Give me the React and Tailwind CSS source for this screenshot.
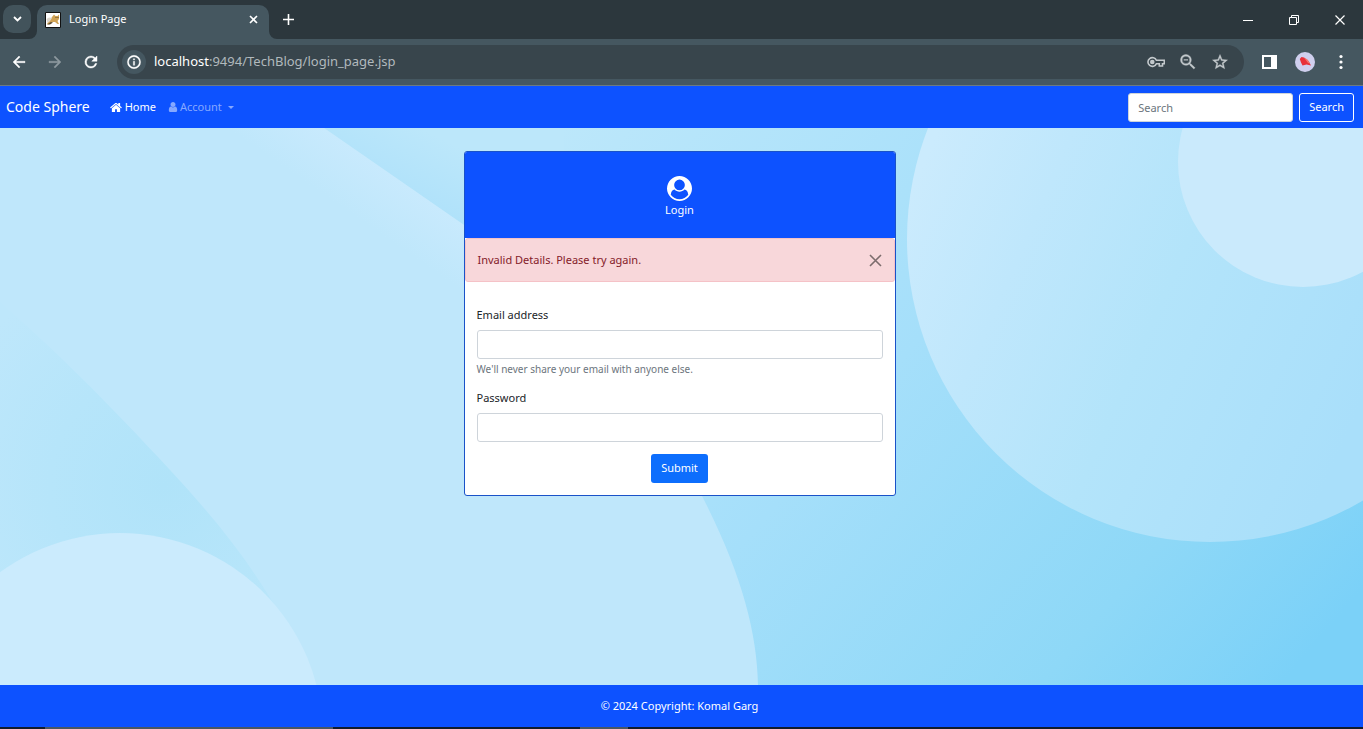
import { useId } from "react";

const FONT = "font-['Segoe_UI','Noto_Sans',sans-serif]";

function Glyph({ d, className, box = "0 0 24 24", rule = "nonzero", bold = 0 }) {
  return (
    <svg viewBox={box} className={className} fill="currentColor" fillRule={rule} stroke={bold ? "currentColor" : "none"} strokeWidth={bold} aria-hidden="true">
      <path d={d} />
    </svg>
  );
}

function Line({ d, className, box = "0 0 24 24", width = 2 }) {
  return (
    <svg viewBox={box} className={className} fill="none" stroke="currentColor" strokeWidth={width} aria-hidden="true">
      <path d={d} />
    </svg>
  );
}

function TabStrip() {
  return (
    <div className="flex h-[39px] items-start bg-[#2c373d]">
      <button aria-label="Search tabs" className="ml-[3px] mt-[5px] grid size-7 place-items-center rounded-[10px] bg-[#42535b]">
        <Line d="M1 1 4.500 4.500 8 1" box="0 0 9 6" className="h-1.5 w-[9px]" width={1.8} />
      </button>
      <div className="flex items-end self-stretch">
        <Glyph d="M8 0v8H0a8 8 0 0 0 8-8z" box="0 0 8 8" className="-ml-0.5 size-2 text-[#455760]" />
        <div className="flex h-[34px] w-[232px] items-center rounded-t-[10px] bg-[#455760] px-2 pb-[5px]">
          <svg viewBox="0 0 16 16" className="size-4" aria-hidden="true">
            <path d="M.5.5h15v15H.5z" fill="#fff" stroke="#111" />
            <path d="M7 5 9 2.500 10.500 4h2L14 2.500V7l-1.500 2 1.500 3h-1.500L10 10H7l-4 2.500-1-1L4.500 9z" fill="#d0a355" />
            <path d="M1.500 7 4 5.500 7 6 5 9l-2.500 2z" fill="#dcd6cc" />
            <path d="M2 12.500 6 10l2 .5-3 2zM10.500 5h1v1h-1zM12.500 5h1v1h-1z" fill="#5c4a30" />
          </svg>
          <span className="ml-2 flex-1 text-[11px]">Login Page</span>
          <button aria-label="Close tab" className="grid size-4 place-items-center">
            <Line d="M1 1 8 8M8 1 1 8" box="0 0 9 9" className="size-[9px]" width={1.6} />
          </button>
        </div>
        <Glyph d="M0 0v8h8a8 8 0 0 1-8-8z" box="0 0 8 8" className="size-2 text-[#455760]" />
      </div>
      <button aria-label="New tab" className="ml-1.5 mt-[14px]">
        <Line d="M5.5 0v11M0 5.5h11" box="0 0 11 11" className="size-[11px]" width={1.6} />
      </button>
      <div className="ml-auto flex h-full items-center gap-9 pr-[18px]">
        <button aria-label="Minimize">
          <Line d="M0 5.5h10" box="0 0 10 10" className="size-[10px]" width={1} />
        </button>
        <button aria-label="Restore">
          <Line d="M.5 2.5h7v7h-7zM2.5 2.5v-2h7v7h-2" box="0 0 10 10" className="size-[10px]" width={1} />
        </button>
        <button aria-label="Close window">
          <Line d="M.5.5l9 9M9.5.5l-9 9" box="0 0 10 10" className="size-[10px]" width={1.2} />
        </button>
      </div>
    </div>
  );
}

function Toolbar() {
  return (
    <div className="flex h-[47px] items-center border-b border-[#6b7a82] bg-[#455760] pr-[14px]">
      <div className="flex items-center gap-[18px] pl-[10px]">
        <button aria-label="Back">
          <Glyph d="M20 11H7.830l5.590-5.590L12 4l-8 8 8 8 1.410-1.410L7.830 13H20v-2z" className="size-[18px]" bold={0.5} />
        </button>
        <button aria-label="Forward" className="text-[#8d999f]">
          <Glyph d="M12 4l-1.410 1.410L16.170 11H4v2h12.170l-5.580 5.590L12 20l8-8z" className="size-[18px]" bold={0.5} />
        </button>
        <button aria-label="Reload">
          <Glyph d="M17.650 6.350A7.960 7.960 0 0 0 12 4a8 8 0 1 0 7.730 10h-2.080A6 6 0 1 1 12 6c1.660 0 3.140.690 4.220 1.780L13 11h7V4l-2.350 2.350z" className="size-[18px]" bold={0.6} />
        </button>
      </div>
      <div className="ml-[17px] flex h-[34px] flex-1 items-center rounded-full bg-[#38454c] pl-[5px] pr-[15px]">
        <button aria-label="Site information" className="grid size-6 place-items-center rounded-full bg-[#455760]">
          <Glyph d="M11 7h2v2h-2zm0 4h2v6h-2zm1-9a10 10 0 1 0 0 20 10 10 0 0 0 0-20zm0 18a8 8 0 1 1 0-16 8 8 0 0 1 0 16z" className="size-4" bold={0.5} />
        </button>
        <span className="ml-2 flex-1 text-[13px] text-[#b1b9bd]">
          <span className="text-white">localhost</span>:9494/TechBlog/login_page.jsp
        </span>
        <div className="flex items-center gap-[13px] text-[#c3c9cc]">
          <button aria-label="Passwords">
            <svg viewBox="0 0 18 12" className="h-3 w-[18px]" fill="none" stroke="currentColor" strokeWidth="1.600" aria-hidden="true">
              <path d="M9.400 4.300A4.400 4.400 0 1 0 9.400 7.700H12.300V10H15.500V7.700H17.300V4.300Z" />
              <circle cx="5.300" cy="6" r="1.500" fill="currentColor" />
            </svg>
          </button>
          <button aria-label="Zoom">
            <Glyph d="M15.500 14h-.790l-.280-.270A6.500 6.500 0 1 0 13.730 14.430l.270.280v.790l5 4.990L20.490 19l-4.990-5zm-6 0a4.500 4.500 0 1 1 0-9 4.500 4.500 0 0 1 0 9zM7 9h5v1H7z" className="size-5" bold={0.4} />
          </button>
          <button aria-label="Bookmark">
            <Glyph d="M22 9.240l-7.190-.620L12 2 9.190 8.630 2 9.240l5.460 4.730L5.820 21 12 17.270 18.180 21l-1.630-7.030L22 9.240zM12 15.400l-3.760 2.270 1-4.280-3.320-2.880 4.380-.380L12 6.100l1.710 4.040 4.380.380-3.320 2.880 1 4.280L12 15.400z" className="size-[18px]" bold={0.5} />
          </button>
        </div>
      </div>
      <div className="ml-[18px] flex items-center gap-[18px]">
        <button aria-label="Side panel">
          <Glyph d="M0 0h15v14H0zM2 2v10h7V2z" box="0 0 15 14" rule="evenodd" className="h-[14px] w-[15px]" />
        </button>
        <button aria-label="Profile">
          <svg viewBox="0 0 20 20" className="size-5" aria-hidden="true">
            <circle cx="10" cy="10" r="10" fill="#cfcfee" />
            <path d="M4.800 7 6.500 5l2.500.5 4.500 3.500 2.500 4.500-4.500-1-4 1L6 10.500z" fill="#e8303a" />
            <path d="m9 5.500 3.500 2 2.500 4-2-.5z" fill="#f4756c" />
          </svg>
        </button>
        <button aria-label="Menu" className="px-1.5">
          <svg viewBox="0 0 4 16" className="h-4 w-1" fill="currentColor" aria-hidden="true">
            <circle cx="2" cy="2.500" r="1.600" />
            <circle cx="2" cy="8" r="1.600" />
            <circle cx="2" cy="13.500" r="1.600" />
          </svg>
        </button>
      </div>
    </div>
  );
}

const HOME =
  "M1472 992v480q0 26-19 45t-45 19h-384v-384h-256v384h-384q-26 0-45-19t-19-45v-480q0-1 .5-3t.5-3l575-474 575 474q1 2 1 6zm223-69l-62 74q-8 9-21 11h-3q-13 0-21-7l-692-577-692 577q-12 8-24 7-13-2-21-11l-62-74q-8-10-7-23.5t11-21.5l719-599q32-26 76-26t76 26l244 204v-195q0-14 9-23t23-9h192q14 0 23 9t9 23v408l219 182q10 8 11 21.5t-7 23.5z";
const USER =
  "M1536 1399q0 109-62.5 187t-150.5 78h-854q-88 0-150.5-78t-62.5-187q0-85 8.5-160.5t31.5-152 58.5-131 94-89 134.5-34.5q131 128 313 128t313-128q76 0 134.5 34.5t94 89 58.5 131 31.5 152 8.5 160.5zm-256-887q0 159-112.5 271.5t-271.5 112.5-271.5-112.5-112.5-271.5 112.5-271.5 271.5-112.5 271.5 112.5 112.5 271.5z";
const USER_CIRCLE =
  "M1523 1339q-22-155-87.5-257.5t-184.5-118.5q-67 74-159.5 115.5t-195.5 41.5-195.5-41.5-159.5-115.5q-119 16-184.5 118.5t-87.5 257.5q106 150 271 237.5t356 87.5 356-87.5 271-237.5zm-243-699q0-159-112.5-271.5t-271.5-112.5-271.5 112.5-112.5 271.5 112.5 271.5 271.5 112.5 271.5-112.5 112.5-271.5zm512 256q0 182-71 347.5t-190.5 286-285.5 191.5-349 71q-182 0-348-71t-286-191-191-286-71-348 71-348 191-286 286-191 348-71 348 71 286 191 191 286 71 348z";

function NavBar() {
  return (
    <nav className="flex h-[42px] items-center bg-[#0d52ff] pl-1.5 pr-[9px] text-[11px]">
      <a href="#top" className="text-sm">Code Sphere</a>
      <a href="#home" className="ml-5 flex items-center gap-[3px]">
        <Glyph d={HOME} box="64 128 1664 1536" className="h-[11px] w-3" />
        Home
      </a>
      <button className="ml-3 flex items-center gap-[2px] text-[#86a8ff]">
        <Glyph d={USER} box="128 0 1536 1792" className="h-3 w-[10px]" />
        Account
        <Glyph d="M0 0h6L3 3z" box="0 0 6 3" className="ml-1 h-[3px] w-1.5" />
      </button>
      <form className="ml-auto flex gap-1.5" onSubmit={(e) => e.preventDefault()}>
        <input
          type="search"
          aria-label="Search"
          placeholder="Search"
          className="h-[29px] w-[165px] rounded-[3px] border border-[#ced4da] bg-white px-[9px] text-[#212529] outline-none placeholder:text-[#6c757d]"
        />
        <button className="h-[29px] rounded-[3px] border border-white px-[9px]">Search</button>
      </form>
    </nav>
  );
}

function Backdrop() {
  return (
    <svg viewBox="0 128 1363 557" preserveAspectRatio="none" className="absolute inset-0 size-full" aria-hidden="true">
      <defs>
        <linearGradient id="sky" gradientUnits="userSpaceOnUse" x1="560" y1="128" x2="1250" y2="720">
          <stop offset="0" stopColor="#bce7fa" />
          <stop offset=".45" stopColor="#a5dffa" />
          <stop offset=".8" stopColor="#8ed8f7" />
          <stop offset="1" stopColor="#7bd1f8" />
        </linearGradient>
        <linearGradient id="disc" gradientUnits="userSpaceOnUse" x1="907" y1="200" x2="1363" y2="400">
          <stop offset="0" stopColor="#cbebfd" />
          <stop offset=".25" stopColor="#bfe7fc" />
          <stop offset=".55" stopColor="#b3e4fa" />
          <stop offset="1" stopColor="#a9dffa" />
        </linearGradient>
        <linearGradient id="band" gradientUnits="userSpaceOnUse" x1="400" y1="175" x2="366" y2="224">
          <stop offset="0" stopColor="#c9eafd" />
          <stop offset="1" stopColor="#bfe7fb" />
        </linearGradient>
        <radialGradient id="shade" gradientUnits="userSpaceOnUse" cx="165" cy="485" r="230">
          <stop offset="0" stopColor="#b0e3f9" />
          <stop offset=".5" stopColor="#b6e5fa" />
          <stop offset="1" stopColor="#bee7fb" />
        </radialGradient>
        <linearGradient id="rim" gradientUnits="userSpaceOnUse" x1="456" y1="219" x2="485" y2="160">
          <stop offset="0" stopColor="#b0e2fa" />
          <stop offset="1" stopColor="#bce7fa" />
        </linearGradient>
      </defs>
      <path d="M0 128h1363v557H0z" fill="url(#sky)" />
      <path d="M324 128 464 225h100V128z" fill="url(#rim)" />
      <path d="M0 128H324L464 225C580 305 660 410 702 496C740 570 757 630 758 685H0z" fill="url(#band)" />
      <path d="M0 302C55 350 105 400 170 470S275 595 316 685H0z" fill="url(#shade)" />
      <circle cx="120" cy="736" r="203" fill="#cbebfd" />
      <circle cx="1210" cy="239" r="303" fill="url(#disc)" />
      <circle cx="1303" cy="162" r="125" fill="#caeafc" />
    </svg>
  );
}

function Field({ label, type, hint }) {
  const id = useId();
  return (
    <div>
      <label htmlFor={id} className="mb-1.5 block leading-[18px]">{label}</label>
      <input id={id} type={type} className="block h-[29px] w-full rounded-[3px] border border-[#ced4da] bg-white px-[9px] outline-none" />
      {hint && <p className="mt-0.5 text-[10px] leading-4 text-[#6c757d]">{hint}</p>}
    </div>
  );
}

function LoginCard() {
  return (
    <section className="relative w-[432px] overflow-hidden rounded-[3px] border border-[#1a52c8] bg-white text-[11px] text-[#212529]">
      <header className="flex flex-col items-center bg-[#0d52ff] pb-[19px] pt-6 text-white">
        <Glyph d={USER_CIRCLE} box="0 0 1792 1792" className="size-[25px]" />
        <p className="leading-[18px]">Login</p>
      </header>
      <div role="alert" className="flex h-11 items-center justify-between rounded-[3px] border border-[#f5c2c7] bg-[#f8d7da] px-3 text-[#842029]">
        Invalid Details. Please try again.
        <button aria-label="Dismiss" className="text-[#7c6c6d]">
          <Line d="M1 1 12 12M12 1 1 12" box="0 0 13 13" className="size-[13px]" width={1.6} />
        </button>
      </div>
      <form className="flex flex-col gap-3 p-3 pt-6" onSubmit={(e) => e.preventDefault()}>
        <Field label="Email address" type="email" hint="We'll never share your email with anyone else." />
        <Field label="Password" type="password" />
        <button className="h-[29px] self-center rounded-[3px] bg-[#0d6efd] px-[10px] text-white">Submit</button>
      </form>
    </section>
  );
}

export default function App() {
  return (
    <div className={`${FONT} flex min-h-screen flex-col text-white`}>
      <TabStrip />
      <Toolbar />
      <NavBar />
      <main className="relative flex flex-1 items-start justify-center pb-6 pr-1 pt-[23px]">
        <Backdrop />
        <LoginCard />
      </main>
      <footer className="bg-[#0d52ff] py-3 pr-1 text-center text-[11px] leading-[18px]">© 2024 Copyright: Komal Garg</footer>
      <div className="flex h-0.5 bg-[#111c2b]">
        <div className="ml-[45px] w-[288px] bg-[#4a5763]" />
        <div className="ml-[247px] w-12 bg-[#4a5763]" />
      </div>
    </div>
  );
}
